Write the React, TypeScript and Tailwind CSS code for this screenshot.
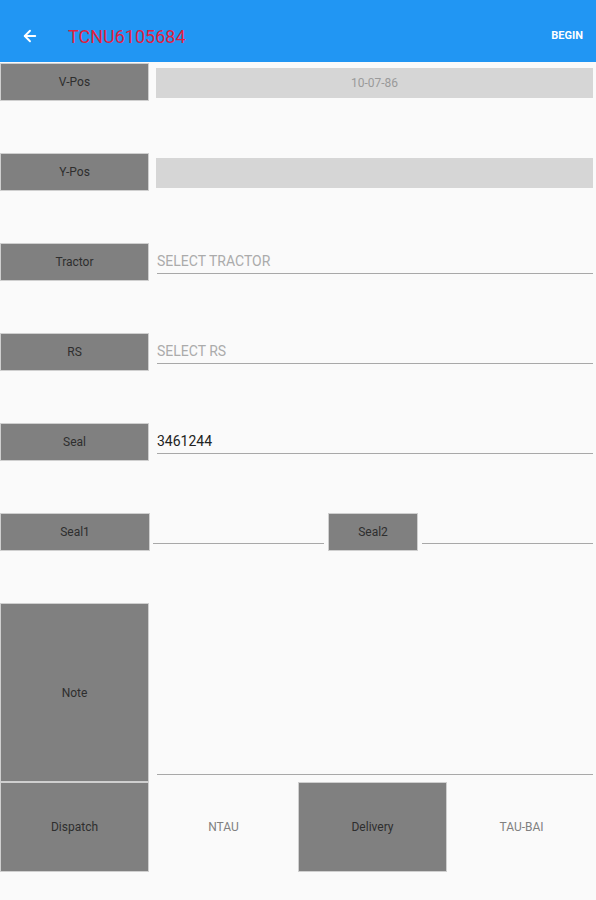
import { ArrowLeft } from "lucide-react";

const labelBox =
  "flex items-center justify-center bg-[#808080] text-[12px] text-[#2e2e2e] border border-[#cfcfcf]";

function Label({ text, className = "" }: { text: string; className?: string }) {
  return <div className={`${labelBox} ${className}`}>{text}</div>;
}

function ReadOnlyRow({ label, value }: { label: string; value?: string }) {
  return (
    <div className="flex h-[90px]">
      <Label text={label} className="w-[149px] h-[38px]" />
      <div className="flex-1 pl-[7px] pr-[3px] pt-[5px]">
        <div className="h-[30px] bg-[#d6d6d6] flex items-center justify-center text-[12px] text-[#9a9a9a]">
          {value}
        </div>
      </div>
    </div>
  );
}

function InputRow({ label, value, placeholder }: { label: string; value?: string; placeholder?: string }) {
  return (
    <div className="flex h-[90px]">
      <Label text={label} className="w-[149px] h-[38px]" />
      <div className="flex-1 pl-[8px] pr-[3px]">
        <div className="h-[31px] border-b-[1.5px] border-[#a8a8a8] flex items-end pb-[1px] text-[14px]">
          {value ? (
            <span className="text-[#222]">{value}</span>
          ) : (
            <span className="text-[#ababab]">{placeholder}</span>
          )}
        </div>
      </div>
    </div>
  );
}

export default function App() {
  return (
    <div className="w-[596px] h-[900px] bg-[#fafafa] font-['Roboto',sans-serif] overflow-hidden">
      {/* Toolbar */}
      <div className="h-[62px] bg-[#2196f3] flex items-center pt-[10px] pl-[21px] pr-[13px]">
        <ArrowLeft className="w-[18px] h-[18px] text-white" strokeWidth={2.5} />
        <span className="ml-[29px] text-[18px] text-[#e0213f]">TCNU6105684</span>
        <span className="ml-auto text-[11px] font-bold text-white">BEGIN</span>
      </div>

      <div className="pt-px">
        <ReadOnlyRow label="V-Pos" value="10-07-86" />
        <ReadOnlyRow label="Y-Pos" />
        <InputRow label="Tractor" placeholder="SELECT TRACTOR" />
        <InputRow label="RS" placeholder="SELECT RS" />
        <InputRow label="Seal" value="3461244" />

        {/* Seal1 / Seal2 */}
        <div className="flex h-[90px]">
          <Label text="Seal1" className="w-[150px] h-[38px]" />
          <div className="w-[171px] h-[31px] border-b-[1.5px] border-[#a8a8a8] ml-[3px]" />
          <Label text="Seal2" className="w-[90px] h-[38px] ml-[4px]" />
          <div className="flex-1 h-[31px] border-b-[1.5px] border-[#a8a8a8] ml-[4px] mr-[3px]" />
        </div>

        {/* Note */}
        <div className="flex h-[179px]">
          <Label text="Note" className="w-[149px] h-[179px]" />
          <div className="flex-1 pl-[8px] pr-[3px]">
            <div className="h-[172px] border-b-[1.5px] border-[#a8a8a8]" />
          </div>
        </div>

        {/* Bottom buttons */}
        <div className="grid grid-cols-4 h-[90px]">
          <Label text="Dispatch" className="h-[90px]" />
          <div className="flex items-center justify-center text-[12px] text-[#808080]">NTAU</div>
          <Label text="Delivery" className="h-[90px]" />
          <div className="flex items-center justify-center text-[12px] text-[#808080]">TAU-BAI</div>
        </div>
      </div>
    </div>
  );
}
